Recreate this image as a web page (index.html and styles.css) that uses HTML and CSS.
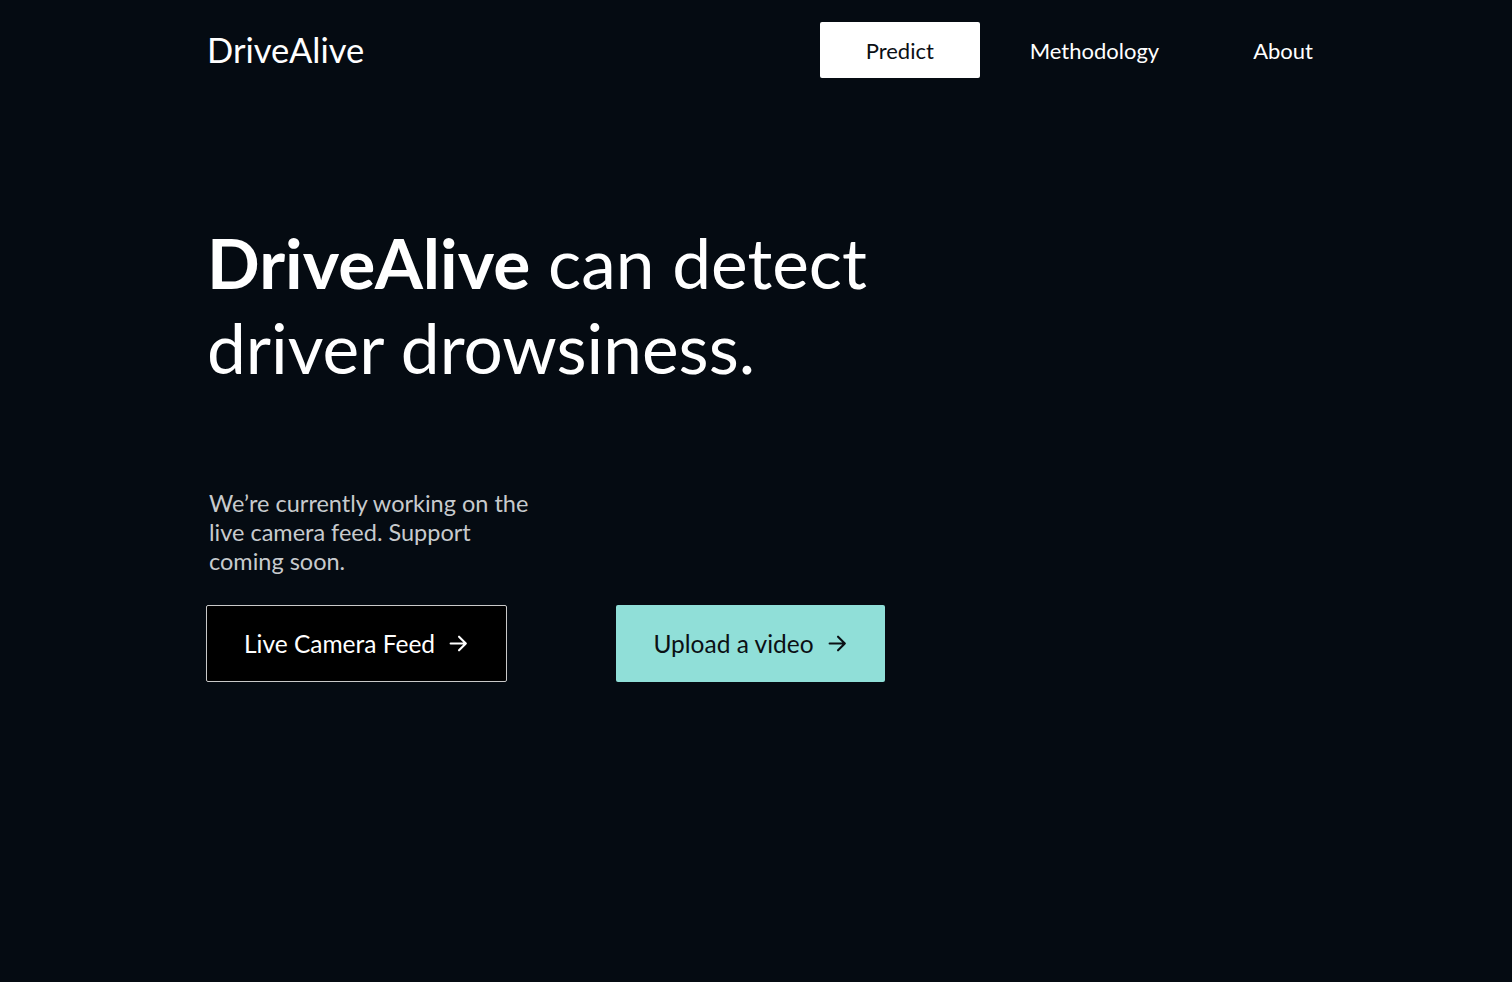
FILE: index.html
```html
<!DOCTYPE html>
<html lang="en">
<head>
<meta charset="utf-8">
<title>DriveAlive</title>
<link rel="stylesheet" href="styles.css">
</head>
<body>
<div class="page">
  <header class="nav">
    <div class="logo">DriveAlive</div>
    <nav class="links">
      <a class="link active" href="#">Predict</a>
      <a class="link" href="#">Methodology</a>
      <a class="link about" href="#">About</a>
    </nav>
  </header>
  <main class="hero">
    <h1 class="title"><strong>DriveAlive</strong> can detect<br>driver drowsiness.</h1>
    <p class="note">We’re currently working on the live camera feed. Support coming soon.</p>
    <div class="actions">
      <a class="btn btn-dark" href="#">Live Camera Feed
        <svg class="arrow" viewBox="0 0 20 20" width="21" height="21"><path d="M2.5 10h14.5M10.5 3.5l6.5 6.5-6.5 6.5" fill="none" stroke="currentColor" stroke-width="2" stroke-linecap="round" stroke-linejoin="round"/></svg>
      </a>
      <a class="btn btn-teal" href="#">Upload a video
        <svg class="arrow" viewBox="0 0 20 20" width="21" height="21"><path d="M2.5 10h14.5M10.5 3.5l6.5 6.5-6.5 6.5" fill="none" stroke="currentColor" stroke-width="2" stroke-linecap="round" stroke-linejoin="round"/></svg>
      </a>
    </div>
  </main>
</div>
</body>
</html>
```
FILE: styles.css
```css
* { box-sizing: border-box; }
html, body { margin: 0; padding: 0; }
body {
  background: #050b12;
  color: #ffffff;
  font-family: "Lato", "Open Sans", sans-serif;
  min-height: 982px;
}
.page {
  width: 1098px;
  margin: 0 auto;
}
.nav {
  display: flex;
  align-items: center;
  justify-content: space-between;
  height: 100px;
}
.logo {
  font-size: 34.5px;
  font-weight: 400;
  margin-top: -2px;
}
.links {
  display: flex;
  align-items: center;
  margin-right: -8px;
}
.link {
  color: #ffffff;
  text-decoration: none;
  font-size: 22px;
  height: 56px;
  display: flex;
  align-items: center;
  justify-content: center;
}
.link.active {
  width: 160px;
  background: #ffffff;
  color: #0b0f14;
  border-radius: 2px;
  margin-right: 50px;
}
.link.about { margin-left: 94px; }
.hero { padding-top: 120px; }
.title {
  margin: 0;
  font-size: 69.4px;
  line-height: 85px;
  font-weight: 400;
}
.title strong { font-weight: 700; }
.note {
  margin: 99px 0 0 2px;
  width: 326px;
  font-size: 23.5px;
  line-height: 29px;
  color: #c7cacd;
}
.actions {
  display: flex;
  gap: 109px;
  margin-top: 29px;
  margin-left: -1px;
}
.btn {
  display: flex;
  align-items: center;
  justify-content: center;
  gap: 13px;
  height: 77px;
  font-size: 24.5px;
  text-decoration: none;
  border-radius: 2px;
}
.btn-dark {
  width: 301px;
  background: #000000;
  color: #ffffff;
  border: 1px solid #c9c9c9;
}
.btn-teal {
  width: 269px;
  background: #90dfd8;
  color: #0b1014;
}
.arrow { display: block; }
```
